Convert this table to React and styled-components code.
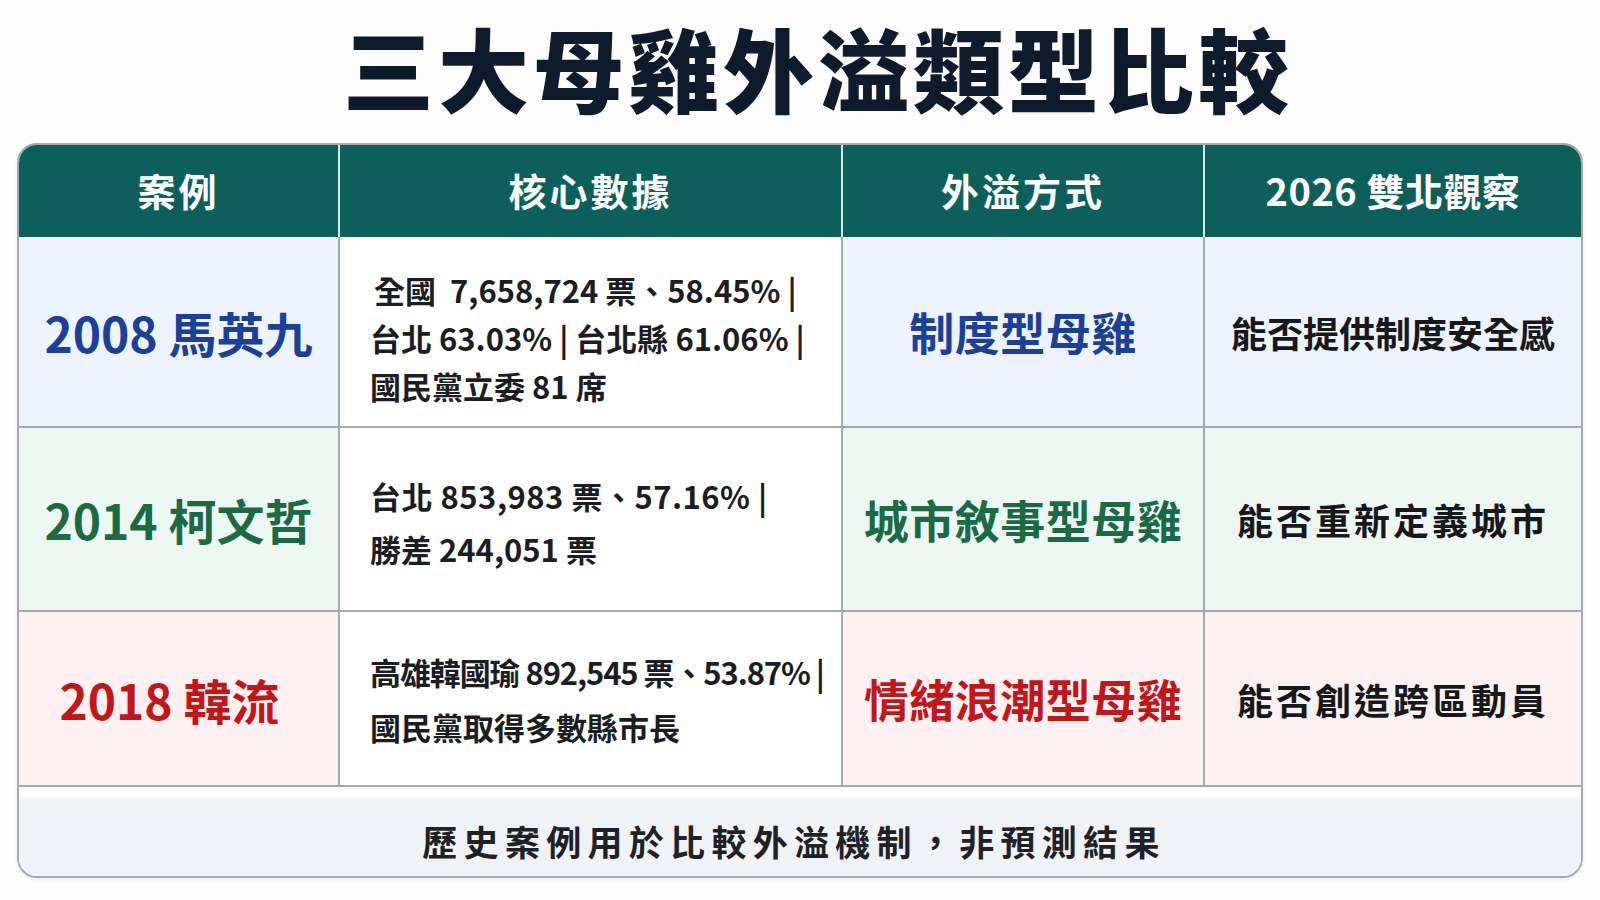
import React from 'react';
import styled, { createGlobalStyle } from 'styled-components';

const GlobalStyle = createGlobalStyle`
  html, body {
    margin: 0;
    padding: 0;
    background: #fdfdfd;
  }
  body {
    font-family: "Noto Sans CJK TC", "Noto Sans", sans-serif;
    color: #1b1d21;
  }
`;

const Page = styled.div`
  width: 1600px;
  height: 900px;
  padding: 0 17px;
  box-sizing: border-box;
  display: flex;
  flex-direction: column;
`;

const Title = styled.h1`
  margin: 0;
  height: 143px;
  display: flex;
  align-items: center;
  justify-content: center;
  font-size: 91px;
  font-weight: 900;
  letter-spacing: 4px;
  color: #0e1b2c;
  padding: 0 0 12px 36px;
  box-sizing: border-box;
`;

const Table = styled.div`
  width: 1566px;
  box-sizing: border-box;
  border: 2px solid #a3a9ae;
  border-radius: 20px;
  overflow: hidden;
  display: grid;
  grid-template-columns: 321px 503px 362px 376px;
  grid-template-rows: 92px 191px 184px 175px 89px;
  box-shadow: 0 2px 4px rgba(0, 0, 0, 0.06);
`;

const HeadCell = styled.div`
  background: #0d5f5b;
  color: #ffffff;
  display: flex;
  align-items: center;
  justify-content: center;
  padding-bottom: 4px;
  box-sizing: border-box;
  font-size: 38px;
  font-weight: 700;
  letter-spacing: ${(p) => p.$ls}px;
  border-right: ${(p) => (p.$last ? 'none' : '2px solid #cfe9e6')};
`;

const tints = {
  blue: '#edf3fc',
  green: '#edf7f1',
  red: '#fcf0f0',
};

const inks = {
  blue: '#1c3f98',
  green: '#1a6a43',
  red: '#c1171b',
};

const Cell = styled.div`
  background: ${(p) => (p.$tone ? tints[p.$tone] : '#ffffff')};
  border-right: ${(p) => (p.$last ? 'none' : '2px solid #a3a9ae')};
  border-bottom: 2px solid #a3a9ae;
  display: flex;
  align-items: center;
  justify-content: center;
  box-sizing: border-box;
`;

const CaseName = styled.span`
  font-size: 48px;
  font-weight: 700;
  color: ${(p) => inks[p.$tone]};
  margin-left: ${(p) => p.$shift || 0}px;
`;

const DataCell = styled(Cell)`
  justify-content: flex-start;
  padding: ${(p) => p.$pad || '0'} 0 0 30px;
`;

const DataText = styled.div`
  font-size: 31px;
  font-weight: 700;
  line-height: ${(p) => p.$lh}px;
  color: #1b1d21;
  white-space: nowrap;
`;

const DataLine = styled.div`
  letter-spacing: ${(p) => p.$ls || 0}px;
  padding-left: ${(p) => p.$indent || 0}px;
`;

const TypeName = styled.span`
  font-size: 45px;
  font-weight: 700;
  color: ${(p) => inks[p.$tone]};
  letter-spacing: 0.5px;
`;

const Watch = styled.span`
  font-size: 36px;
  font-weight: 700;
  color: #16181b;
  letter-spacing: ${(p) => p.$ls || 0}px;
`;

const Footer = styled.div`
  grid-column: 1 / -1;
  background: linear-gradient(#ffffff 0, #ffffff 9px, #eff2f6 14px, #eff2f6 100%);
  display: flex;
  align-items: center;
  justify-content: center;
  padding: 18px 12px 0 0;
  box-sizing: border-box;
  font-size: 35px;
  font-weight: 700;
  letter-spacing: 6.3px;
  color: #1e2226;
`;

const headers = [
  { label: '案例', ls: 3 },
  { label: '核心數據', ls: 3 },
  { label: '外溢方式', ls: 3 },
  { label: '2026 雙北觀察', ls: 0.5 },
];

const rows = [
  {
    tone: 'blue',
    name: '2008 馬英九',
    shift: 0,
    data: [
      { text: '全國\u00a0\u00a07,658,724 票、58.45% |', indent: 4 },
      { text: '台北 63.03% | 台北縣 61.06% |' },
      { text: '國民黨立委 81 席' },
    ],
    lh: 48,
    pad: '12px',
    type: '制度型母雞',
    watch: '能否提供制度安全感',
    ls: 0,
  },
  {
    tone: 'green',
    name: '2014 柯文哲',
    shift: 0,
    data: [{ text: '台北 853,983 票、57.16% |', ls: 0.5 }, { text: '勝差 244,051 票' }],
    lh: 53,
    pad: '6px',
    type: '城市敘事型母雞',
    watch: '能否重新定義城市',
    ls: 3,
  },
  {
    tone: 'red',
    name: '2018 韓流',
    shift: -18,
    data: [{ text: '高雄韓國瑜 892,545 票、53.87% |', ls: -1.1 }, { text: '國民黨取得多數縣市長' }],
    lh: 55,
    pad: '0',
    type: '情緒浪潮型母雞',
    watch: '能否創造跨區動員',
    ls: 3,
  },
];

export default function App() {
  return (
    <>
      <GlobalStyle />
      <Page>
        <Title>三大母雞外溢類型比較</Title>
        <Table>
          {headers.map((h, i) => (
            <HeadCell key={h.label} $ls={h.ls} $last={i === headers.length - 1}>
              {h.label}
            </HeadCell>
          ))}
          {rows.map((r) => (
            <React.Fragment key={r.name}>
              <Cell $tone={r.tone}>
                <CaseName $tone={r.tone} $shift={r.shift}>{r.name}</CaseName>
              </Cell>
              <DataCell $pad={r.pad}>
                <DataText $lh={r.lh}>
                  {r.data.map((line) => (
                    <DataLine key={line.text} $ls={line.ls} $indent={line.indent}>
                      {line.text}
                    </DataLine>
                  ))}
                </DataText>
              </DataCell>
              <Cell $tone={r.tone}>
                <TypeName $tone={r.tone}>{r.type}</TypeName>
              </Cell>
              <Cell $tone={r.tone} $last>
                <Watch $ls={r.ls}>{r.watch}</Watch>
              </Cell>
            </React.Fragment>
          ))}
          <Footer>歷史案例用於比較外溢機制，非預測結果</Footer>
        </Table>
      </Page>
    </>
  );
}
